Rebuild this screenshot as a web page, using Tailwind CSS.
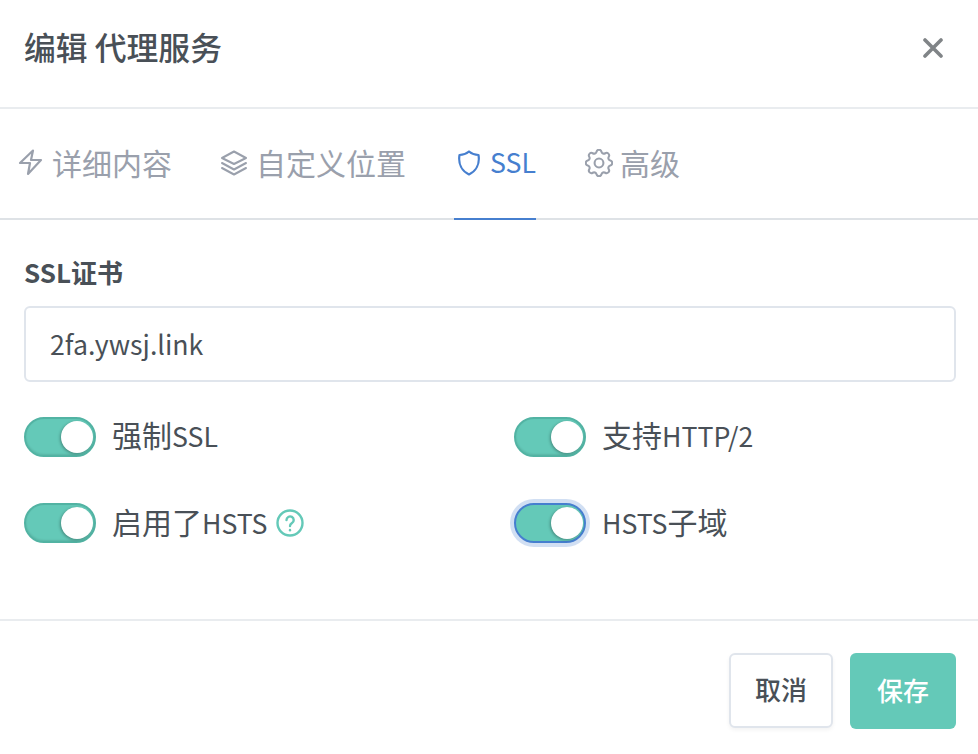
<!DOCTYPE html>
<html lang="zh-CN">
<head>
    <meta charset="UTF-8">
    <title>编辑 代理服务</title>
    <script src="https://cdn.jsdelivr.net/npm/@tailwindcss/browser@4"></script>
</head>
<body class="bg-white h-[754px] overflow-hidden font-['Noto_Sans_CJK_SC','Noto_Sans',sans-serif] text-[#495057]">

    <!-- Header -->
    <div class="h-[109px] border-b-2 border-[#e9ecef] flex items-center justify-between pl-6 pr-[35px] pb-[15px]">
        <h1 class="text-[31.8px] leading-[40px] font-medium">编辑 代理服务</h1>
        <svg class="w-[20px] h-[20px] mt-[4px] text-[#808487]" viewBox="0 0 20 20" fill="none" stroke="currentColor" stroke-width="3.600" stroke-linecap="round"><path d="M2 2l16 16M18 2L2 18"/></svg>
    </div>

    <!-- Tabs -->
    <div class="h-[111px] border-b-2 border-[#dee2e6] flex pl-[18px] text-[#9aa0ac] text-[30px]">
        <div class="flex items-center gap-[9px] pb-[2px] mr-[48px]">
            <svg class="w-[25px] h-[27px]" viewBox="0 0 25 27" fill="none" stroke="currentColor" stroke-width="2.200" stroke-linecap="round" stroke-linejoin="round"><path d="M15 1.500L2 14h10l-2 11 13-14H13z"/></svg>
            <span>详细内容</span>
        </div>
        <div class="flex items-center gap-[8px] pb-[2px] mr-[48px]">
            <svg class="w-[28px] h-[26px]" viewBox="0 0 28 26" fill="none" stroke="currentColor" stroke-width="2" stroke-linecap="round" stroke-linejoin="round"><path d="M14 1.500L26 8l-12 6L2 8z"/><path d="M2 13l12 6.500L26 13"/><path d="M2 18l12 6.500L26 18"/></svg>
            <span>自定义位置</span>
        </div>
        <div class="flex items-center gap-[10px] pb-[2px] pl-1 mr-[49px] text-[#467fcf] -mb-[2px] border-b-2 border-[#467fcf] h-[111px]">
            <svg class="w-[22px] h-[26px]" viewBox="0 0 22 26" fill="none" stroke="currentColor" stroke-width="2.200" stroke-linecap="round" stroke-linejoin="round"><path d="M11 1.500C14 4 17 5 20.500 5C22 14 18 21 11 24.500C4 21 0 14 1.500 5C5 5 8 4 11 1.500z"/></svg>
            <span class="text-[26.7px]">SSL</span>
        </div>
        <div class="flex items-center gap-[7px] pb-[2px]">
            <svg class="w-[28px] h-[28px]" viewBox="2.500 2.500 19 19" fill="none" stroke="currentColor" stroke-width="1.400" stroke-linecap="round" stroke-linejoin="round"><path d="M10.325 4.317c.426-1.756 2.924-1.756 3.350 0a1.724 1.724 0 0 0 2.573 1.066c1.543-.940 3.310.826 2.370 2.370a1.724 1.724 0 0 0 1.065 2.572c1.756.426 1.756 2.924 0 3.350a1.724 1.724 0 0 0-1.066 2.573c.940 1.543-.826 3.310-2.370 2.370a1.724 1.724 0 0 0-2.572 1.065c-.426 1.756-2.924 1.756-3.350 0a1.724 1.724 0 0 0-2.573-1.066c-1.543.940-3.310-.826-2.370-2.370a1.724 1.724 0 0 0-1.065-2.572c-1.756-.426-1.756-2.924 0-3.350a1.724 1.724 0 0 0 1.066-2.573c-.940-1.543.826-3.310 2.370-2.370c1 .608 2.296.070 2.572-1.065"/><circle cx="12" cy="12" r="3"/></svg>
            <span>高级</span>
        </div>
    </div>

    <!-- Body -->
    <div class="h-[401px] border-b-2 border-[#e9ecef] pl-6 pr-[22px] pt-[34px]">
        <label class="block text-[26px] leading-[36px] font-semibold mb-[16px]">SSL证书</label>
        <div class="h-[76px] border-2 border-[#e0e5ec] rounded-[6px] flex items-center px-[24px] text-[26.7px]">2fa.ywsj.link</div>

        <div class="grid grid-cols-[490px_1fr] gap-y-[46px] mt-[34px] text-[30px] leading-[36px]">
            <div class="flex items-center gap-4">
                <span class="relative w-[72px] h-[40px] rounded-full bg-[#64c9b8] border-2 border-[#52b3a3] shadow-[inset_0_-1px_2px_rgba(0,0,0,0.1)]">
                    <span class="absolute right-[1px] top-[2px] w-[32px] h-[32px] rounded-full bg-white shadow-[-1px_1px_3px_rgba(0,0,0,0.3)]"></span>
                </span>
                <span class="pb-[3px]">强制<span class="text-[26.7px]">SSL</span></span>
            </div>
            <div class="flex items-center gap-4">
                <span class="relative w-[72px] h-[40px] rounded-full bg-[#64c9b8] border-2 border-[#52b3a3] shadow-[inset_0_-1px_2px_rgba(0,0,0,0.1)]">
                    <span class="absolute right-[1px] top-[2px] w-[32px] h-[32px] rounded-full bg-white shadow-[-1px_1px_3px_rgba(0,0,0,0.3)]"></span>
                </span>
                <span class="pb-[3px]">支持<span class="text-[26.7px]">HTTP/2</span></span>
            </div>
            <div class="flex items-center gap-4">
                <span class="relative w-[72px] h-[40px] rounded-full bg-[#64c9b8] border-2 border-[#52b3a3] shadow-[inset_0_-1px_2px_rgba(0,0,0,0.1)]">
                    <span class="absolute right-[1px] top-[2px] w-[32px] h-[32px] rounded-full bg-white shadow-[-1px_1px_3px_rgba(0,0,0,0.3)]"></span>
                </span>
                <span class="pb-[2px]">启用了<span class="text-[26.7px]">HSTS</span></span>
                <svg class="w-[28px] h-[28px] -ml-[7px] text-[#64c9b8]" viewBox="0 0 28 28" fill="none" stroke="currentColor" stroke-width="2.400" stroke-linecap="round"><circle cx="14" cy="14" r="12.500"/><path d="M10.500 11a3.600 3.600 0 1 1 5.500 3.100c-1.200.8-2 1.400-2 2.900"/><path d="M14 21v.2"/></svg>
            </div>
            <div class="flex items-center gap-4">
                <span class="relative w-[72px] h-[40px] rounded-full bg-[#64c9b8] border-2 border-[#467fcf] shadow-[0_0_0_4px_rgba(70,127,207,0.25)]">
                    <span class="absolute right-[1px] top-[2px] w-[32px] h-[32px] rounded-full bg-white shadow-[-1px_1px_3px_rgba(0,0,0,0.3)]"></span>
                </span>
                <span class="pb-[2px]"><span class="text-[26.7px]">HSTS</span>子域</span>
            </div>
        </div>
    </div>

    <!-- Footer -->
    <div class="flex justify-end gap-[17px] pr-[22px] pt-[32px]">
        <button class="w-[104px] h-[75px] pb-[4px] bg-white border-2 border-[#e0e5ec] rounded-[6px] text-[26px] font-medium text-[#495057] shadow-[0_2px_4px_rgba(0,0,0,0.05)]">取消</button>
        <button class="w-[106px] h-[76px] pb-[4px] bg-[#64c9b8] rounded-[6px] text-[26px] font-medium text-white">保存</button>
    </div>

</body>
</html>
